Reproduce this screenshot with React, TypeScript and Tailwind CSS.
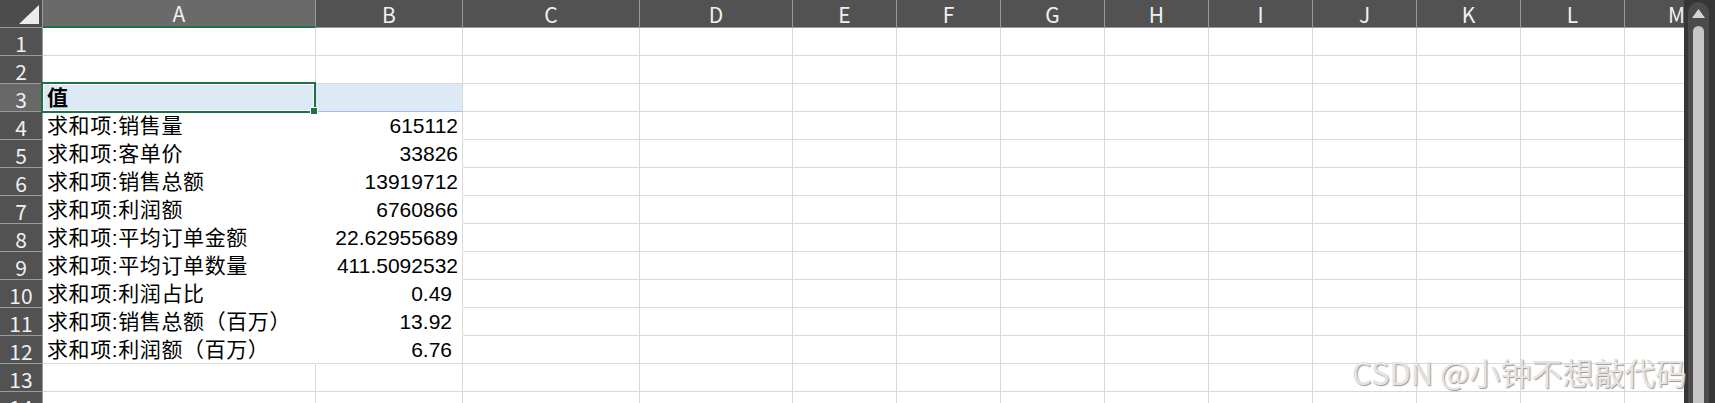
import React from 'react'

type Col = { key: string; w: string }

const cols: Col[] = [
  { key: 'A', w: 'w-[273px]' },
  { key: 'B', w: 'w-[147px]' },
  { key: 'C', w: 'w-[177px]' },
  { key: 'D', w: 'w-[153px]' },
  { key: 'E', w: 'w-[104px]' },
  { key: 'F', w: 'w-[104px]' },
  { key: 'G', w: 'w-[104px]' },
  { key: 'H', w: 'w-[104px]' },
  { key: 'I', w: 'w-[104px]' },
  { key: 'J', w: 'w-[104px]' },
  { key: 'K', w: 'w-[104px]' },
  { key: 'L', w: 'w-[104px]' },
  { key: 'M', w: 'w-[104px]' },
]

// pivot values, row 4..12
const rows: { label: string; value: string; pad?: boolean }[] = [
  { label: '求和项:销售量', value: '615112' },
  { label: '求和项:客单价', value: '33826' },
  { label: '求和项:销售总额', value: '13919712' },
  { label: '求和项:利润额', value: '6760866' },
  { label: '求和项:平均订单金额', value: '22.62955689' },
  { label: '求和项:平均订单数量', value: '411.5092532' },
  { label: '求和项:利润占比', value: '0.49', pad: true },
  { label: '求和项:销售总额（百万）', value: '13.92', pad: true },
  { label: '求和项:利润额（百万）', value: '6.76', pad: true },
]

const cellFont = "[font-family:'Liberation_Sans','Noto_Sans_CJK_SC',sans-serif] text-black leading-[26px]"
const headFont = "[font-family:'Noto_Sans_CJK_SC',sans-serif] text-[21px] leading-[24px] text-[#f0f0f0]"

function RowHead({ n, active }: { n: number; active?: boolean }) {
  return (
    <div
      className={`w-[43px] shrink-0 h-full flex items-center justify-center pt-[2px] border-r border-b border-[#9a9a9a] ${
        active ? 'bg-[#686868]' : 'bg-[#525252]'
      } ${headFont}`}
    >
      {n}
    </div>
  )
}

function EmptyCells({ from }: { from: number }) {
  return (
    <>
      {cols.slice(from).map((c) => (
        <div key={c.key} className={`${c.w} shrink-0 h-full border-r border-b border-[#d9d9d9] bg-white`} />
      ))}
    </>
  )
}

export default function App() {
  return (
    <div className="relative w-[1715px] h-[403px] overflow-hidden flex bg-white">
      <div className="w-[1684px] h-full overflow-hidden flex flex-col">
        {/* column headers */}
        <div className="h-[28px] shrink-0 flex">
          <div className="w-[43px] shrink-0 h-full bg-[#4c4c4c] border-r border-b border-[#9a9a9a] flex">
            <svg width="42" height="27" viewBox="0 0 42 27">
              <polygon points="39,5 39,24 19,24" fill="#ececec" />
            </svg>
          </div>
          {cols.map((c) => (
            <div
              key={c.key}
              className={`${c.w} shrink-0 h-full flex items-center justify-center border-r ${
                c.key === 'A'
                  ? 'bg-[#6a6a6a] border-b-2 border-r-[#9a9a9a] border-b-[#1e7145]'
                  : 'bg-[#525252] border-b border-[#9a9a9a]'
              } ${headFont}`}
            >
              {c.key}
            </div>
          ))}
        </div>

        {/* rows 1-2 */}
        {[1, 2].map((n) => (
          <div key={n} className="h-[28px] shrink-0 flex">
            <RowHead n={n} />
            <EmptyCells from={0} />
          </div>
        ))}

        {/* row 3 – pivot header, selected */}
        <div className="h-[28px] shrink-0 flex">
          <RowHead n={3} active />
          <div className={`relative w-[273px] shrink-0 h-full bg-[#dde9f5] border-r border-b border-[#dde9f5] flex items-center pl-[4px] font-bold text-[21px] ${cellFont}`}>
            值
            <div className="absolute -left-[2px] -top-[2px] w-[275px] h-[31px] border-2 border-[#1e7145] shadow-[inset_0_0_0_1px_white] pointer-events-none" />
            <div className="absolute left-[267px] top-[23px] w-[8px] h-[8px] bg-[#1e7145] border border-white" />
          </div>
          <div className="w-[147px] shrink-0 h-full bg-[#dde9f5] border-r border-b border-r-[#d9d9d9] border-b-[#a3bfe6]" />
          <EmptyCells from={2} />
        </div>

        {/* rows 4-12 */}
        {rows.map((r, i) => {
          const last = i === rows.length - 1
          return (
            <div key={r.label} className="h-[28px] shrink-0 flex">
              <RowHead n={i + 4} />
              <div
                className={`w-[273px] shrink-0 h-full bg-white border-r border-b border-r-white ${
                  last ? 'border-b-[#d9d9d9]' : 'border-b-white'
                } flex items-center pl-[4px] whitespace-nowrap text-[21px] tracking-[0.6px] ${cellFont}`}
              >
                {r.label}
              </div>
              <div
                className={`w-[147px] shrink-0 h-full bg-white border-r border-b border-r-[#d9d9d9] ${
                  last ? 'border-b-[#d9d9d9]' : 'border-b-white'
                } flex items-center justify-end ${r.pad ? 'pr-[10px]' : 'pr-[4px]'} text-[21px] ${cellFont}`}
              >
                {r.value}
              </div>
              <EmptyCells from={2} />
            </div>
          )
        })}

        {/* rows 13-14 */}
        {[13, 14].map((n) => (
          <div key={n} className="h-[28px] shrink-0 flex">
            <RowHead n={n} />
            <EmptyCells from={0} />
          </div>
        ))}
      </div>

      {/* vertical scrollbar */}
      <div className="w-[31px] h-full shrink-0 bg-[#363636] flex flex-col pt-[2px] pl-[4px]">
        <div className="w-[21px] flex-1 bg-[#4b4b4b] rounded-t-full flex flex-col items-center pt-[7px]">
          <svg width="13" height="9" viewBox="0 0 13 9">
            <polygon points="6.5,0 13,9 0,9" fill="#d6d6d6" />
          </svg>
          <div className="mt-[8px] w-[11px] flex-1 bg-[#c6c6c6] rounded-t-full" />
        </div>
      </div>

      {/* watermark */}
      <div className="absolute left-[1352px] top-[352px] whitespace-nowrap [font-family:'Noto_Sans_CJK_SC',sans-serif] text-[31px] leading-[40px] text-[#e4e4e4] [text-shadow:1px_1px_1px_#9a9a9a] pointer-events-none">
        CSDN @小钟不想敲代码
      </div>
    </div>
  )
}
